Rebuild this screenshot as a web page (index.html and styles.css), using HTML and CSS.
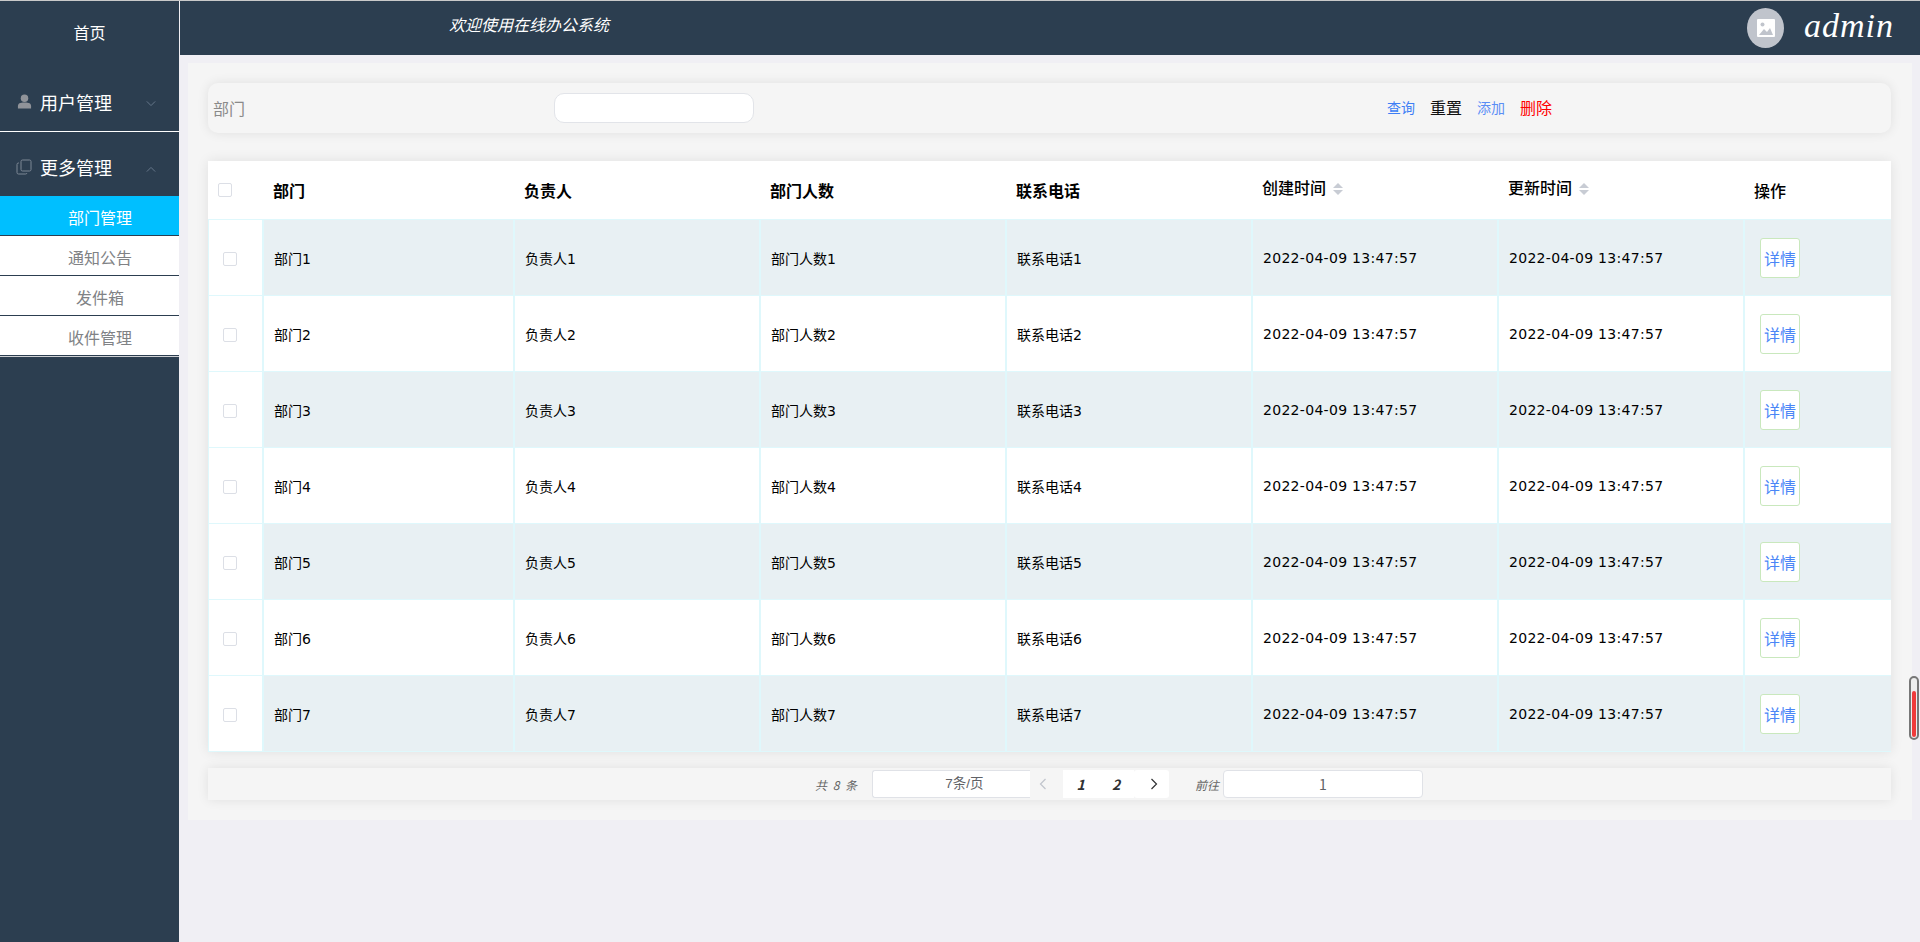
FILE: index.html
```html
<!DOCTYPE html>
<html lang="zh">
<head>
<meta charset="utf-8">
<title>在线办公系统</title>
<link rel="stylesheet" href="styles.css">
</head>
<body>
<aside class="sidebar">
  <div class="home">首页</div>
  <div class="group group-first">
    <svg class="group-icon" viewBox="0 0 16 16"><circle cx="8" cy="4.500" r="4"/><path d="M1 15.500v-2.500C1 10 3 9 8 9s7 1 7 4v2.500z"/></svg>
    <span class="group-title">用户管理</span>
    <svg class="chev" viewBox="0 0 12 8"><path d="M1 1.500l5 5 5-5"/></svg>
  </div>
  <div class="group group-second">
    <svg class="group-icon copy" viewBox="0 0 16 16"><rect x="5" y="1" width="10" height="11" rx="1.500"/><path d="M3 4H2.500A1.500 1.500 0 0 0 1 5.500v8A1.500 1.500 0 0 0 2.500 15h7a1.500 1.500 0 0 0 1.500-1"/></svg>
    <span class="group-title">更多管理</span>
    <svg class="chev" viewBox="0 0 12 8"><path d="M1 6.500l5-5 5 5"/></svg>
  </div>
  <ul class="submenu">
    <li class="active">部门管理</li>
    <li>通知公告</li>
    <li>发件箱</li>
    <li>收件管理</li>
  </ul>
</aside>
<div class="main">
  <header class="topbar">
    <div class="welcome">欢迎使用在线办公系统</div>
    <div class="user">
      <span class="avatar"><svg viewBox="0 0 20 20"><rect x="1" y="1" width="18" height="18" rx="1" fill="#fff"/><circle cx="6.500" cy="6.500" r="2" fill="#c0c4cc"/><path d="M3 17l5-6 3 3 3-4 3 7z" fill="#c0c4cc"/></svg></span>
      <span class="username">admin</span>
    </div>
  </header>
  <section class="panel">
    <div class="search">
      <label class="search-label">部门</label>
      <div class="search-input"></div>
      <div class="actions">
        <a class="act act-blue">查询</a>
        <a class="act act-black">重置</a>
        <a class="act act-blue2">添加</a>
        <a class="act act-red">删除</a>
      </div>
    </div>
    <div class="table-card">
      <table class="grid">
        <colgroup><col class="c0"><col class="c1"><col class="c2"><col class="c2"><col class="c2"><col class="c2"><col class="c2"><col></colgroup>
        <thead>
          <tr>
            <th class="cb-head"><span class="check"></span></th>
            <th>部门</th><th>负责人</th><th>部门人数</th><th>联系电话</th>
            <th class="sortable">创建时间<span class="sort"><i class="up"></i><i class="down"></i></span></th>
            <th class="sortable">更新时间<span class="sort"><i class="up"></i><i class="down"></i></span></th>
            <th class="op-head">操作</th>
          </tr>
        </thead>
        <tbody>
          <tr><td class="cb"><span class="check"></span></td><td>部门1</td><td>负责人1</td><td>部门人数1</td><td>联系电话1</td><td class="time">2022-04-09 13:47:57</td><td class="time">2022-04-09 13:47:57</td><td><button class="detail">详情</button></td></tr>
          <tr><td class="cb"><span class="check"></span></td><td>部门2</td><td>负责人2</td><td>部门人数2</td><td>联系电话2</td><td class="time">2022-04-09 13:47:57</td><td class="time">2022-04-09 13:47:57</td><td><button class="detail">详情</button></td></tr>
          <tr><td class="cb"><span class="check"></span></td><td>部门3</td><td>负责人3</td><td>部门人数3</td><td>联系电话3</td><td class="time">2022-04-09 13:47:57</td><td class="time">2022-04-09 13:47:57</td><td><button class="detail">详情</button></td></tr>
          <tr><td class="cb"><span class="check"></span></td><td>部门4</td><td>负责人4</td><td>部门人数4</td><td>联系电话4</td><td class="time">2022-04-09 13:47:57</td><td class="time">2022-04-09 13:47:57</td><td><button class="detail">详情</button></td></tr>
          <tr><td class="cb"><span class="check"></span></td><td>部门5</td><td>负责人5</td><td>部门人数5</td><td>联系电话5</td><td class="time">2022-04-09 13:47:57</td><td class="time">2022-04-09 13:47:57</td><td><button class="detail">详情</button></td></tr>
          <tr><td class="cb"><span class="check"></span></td><td>部门6</td><td>负责人6</td><td>部门人数6</td><td>联系电话6</td><td class="time">2022-04-09 13:47:57</td><td class="time">2022-04-09 13:47:57</td><td><button class="detail">详情</button></td></tr>
          <tr><td class="cb"><span class="check"></span></td><td>部门7</td><td>负责人7</td><td>部门人数7</td><td>联系电话7</td><td class="time">2022-04-09 13:47:57</td><td class="time">2022-04-09 13:47:57</td><td><button class="detail">详情</button></td></tr>
        </tbody>
      </table>
    </div>
    <div class="pager">
      <span class="total">共 8 条</span>
      <div class="size">7条/页</div>
      <div class="prev"><svg viewBox="0 0 8 12"><path d="M6.500 1l-5 5 5 5"/></svg></div>
      <div class="pages"><b>1</b><b>2</b></div>
      <div class="next"><svg viewBox="0 0 8 12"><path d="M1.500 1l5 5-5 5"/></svg></div>
      <span class="goto">前往</span>
      <div class="jump">1</div>
    </div>
  </section>
</div>
<div class="scroll-thumb"><span></span></div>
</body>
</html>
```
FILE: styles.css
```css
* { box-sizing: border-box; }
html, body { margin: 0; height: 942px; overflow: hidden; }
body {
  display: flex;
  border-top: 1px solid #c9c9c9;
  background: #f0eff4;
  font-family: "Noto Sans CJK SC", "Liberation Sans", sans-serif;
  font-size: 14px;
  color: #000;
}
.sidebar { width: 179px; flex: none; height: 941px; background: #2c3e50; color: #fff; }
.home { height: 67px; padding-bottom: 6px; display: flex; align-items: center; justify-content: center; font-size: 16px; }
.group { height: 64px; padding: 6px 23px 0 17px; display: flex; align-items: center; }
.group-first { padding-top: 4px; border-bottom: 1px solid #fff; }
.group-icon { width: 15px; height: 15px; fill: #909399; flex: none; }
.group-icon.copy { width: 16px; height: 16px; margin-left: -1px; fill: none; stroke: #7d8895; stroke-width: 1; }
.group-title { font-size: 18px; margin-left: 8px; flex: 1; }
.chev { width: 10px; height: 7px; margin-top: 4px; fill: none; stroke: #66778a; stroke-width: 1.200; }
.submenu { list-style: none; margin: 0; padding: 0 0 1px; background: #cfd1d4; }
.submenu li { height: 40px; padding: 4px 0 0 21px; line-height: 35px; text-align: center; font-size: 16px; color: #808285; background: #fff; border-bottom: 1px solid #2c3e50; }
.submenu li.active { background: #00bfff; color: #fff; }
.main { flex: 1; min-width: 0; margin-left: 1px; }
.topbar { height: 54px; background: #2c3e50; display: flex; align-items: center; justify-content: space-between; padding: 0 26px 0 269px; }
.welcome { color: #fff; font-size: 16px; font-style: italic; padding-bottom: 8px; }
.user { display: flex; align-items: center; }
.avatar { width: 37px; height: 40px; border-radius: 50%; background: #c0c4cc; display: flex; align-items: center; justify-content: center; }
.avatar svg { width: 20px; height: 20px; }
.username { margin-left: 20px; padding-bottom: 4px; font-family: "Liberation Serif", serif; font-style: italic; font-size: 34px; line-height: 40px; color: #fff; letter-spacing: 1px; }
.panel { margin: 8px 8px 0 8px; height: 757px; background: #f5f5f5; padding: 20px 21px 0 20px; }
.search { height: 50px; border-radius: 10px; background: #f5f5f5; box-shadow: 0 0 12px rgba(0,0,0,.09); display: flex; align-items: center; padding-left: 5px; }
.search-label { width: 341px; font-size: 16px; color: #8a8a8a; }
.search-input { width: 200px; height: 30px; background: #fff; border: 1px solid #e2e4e9; border-radius: 10px; }
.actions { margin-left: 633px; padding-bottom: 2px; display: flex; align-items: center; }
.act-blue, .act-blue2 { font-size: 14px; color: #3d7ef5; }
.act-blue2 { color: #5b8ef5; }
.act-black { font-size: 16px; color: #111; margin: 0 15px; }
.act-red { font-size: 16px; color: #ff0000; margin-left: 15px; }
.table-card { margin-top: 28px; height: 591px; background: #fff; box-shadow: 0 0 12px rgba(0,0,0,.09); }
.grid { table-layout: fixed; width: 1683px; border-collapse: separate; border-spacing: 0; }
.c0 { width: 56px; }
.c1 { width: 251px; }
.c2 { width: 246px; }
.grid th { height: 59px; text-align: left; padding: 0 0 0 9px; font-size: 16px; font-weight: 700; background: #fff; border-bottom: 1px solid #dff8fc; }
.grid th.sortable { padding-bottom: 7px; font-weight: 500; }
.grid th.op-head { font-weight: 500; }
.grid td { height: 76px; padding: 0 0 0 10px; font-family: "DejaVu Sans", "Noto Sans CJK SC", sans-serif; font-size: 14px; border-bottom: 1px solid #dff8fc; border-right: 2px solid #dff8fc; }
.grid td:last-child { border-right: 0; padding-left: 15px; }
.grid tbody tr:nth-child(odd) td { background: #e8f0f3; }
.grid tbody tr td.cb, .grid tbody tr:nth-child(odd) td.cb { background: #fff; padding: 2px 0 0 14px; border-left: 1px solid #dff8fc; }
.grid .cb-head { padding-left: 10px; }
.check { display: block; width: 14px; height: 14px; background: #fff; border: 1px solid #dcdfe6; border-radius: 2px; }
.grid td.time { letter-spacing: .3px; }
.detail { width: 40px; height: 40px; padding: 0; background: #fff; border: 1px solid #c9e8bd; border-radius: 3px; color: #4a86f7; font-family: "Noto Sans CJK SC", sans-serif; font-size: 16px; }
.sort { display: inline-block; vertical-align: middle; margin-left: 7px; width: 10px; height: 12px; }
.sort i { display: block; width: 0; height: 0; border-left: 5px solid transparent; border-right: 5px solid transparent; }
.sort .up { border-bottom: 5px solid #c8ccd4; margin-bottom: 2px; }
.sort .down { border-top: 5px solid #c8ccd4; }
.pager { margin-top: 16px; height: 32px; background: #f5f5f5; box-shadow: 0 0 12px rgba(0,0,0,.09); display: flex; align-items: center; padding-left: 607px; }
.total { width: 57px; font-size: 12px; color: #666; font-style: italic; letter-spacing: 1.500px; }
.size { width: 158px; height: 28px; padding-left: 26px; line-height: 26px; background: #fff; border: 1px solid #e0e2e7; border-right: 0; border-radius: 3px 0 0 3px; text-align: center; color: #606266; font-family: "Liberation Sans", "Noto Sans CJK SC", sans-serif; font-size: 13.500px; }
.prev, .next { height: 28px; display: flex; align-items: center; justify-content: center; background: #f5f5f5; }
.prev { width: 33px; padding-right: 8px; }
.next { width: 35px; padding-left: 4px; background: #fff; border-radius: 3px; }
.prev svg, .next svg { width: 8px; height: 12px; fill: none; stroke: #303133; stroke-width: 1.200; }
.prev svg { stroke: #c0c4cc; }
.pages { width: 71px; height: 28px; background: #fff; display: flex; align-items: center; justify-content: space-around; font-style: italic; font-size: 14px; color: #303133; }
.goto { margin-left: 26px; width: 28px; font-size: 12px; font-style: italic; color: #666; }
.jump { width: 200px; height: 28px; line-height: 26px; background: #fff; border: 1px solid #e0e2e7; border-radius: 4px; text-align: center; color: #606266; font-size: 14px; }
.scroll-thumb { position: fixed; left: 1909px; top: 676px; width: 10px; height: 64px; border: 2px solid #777; border-radius: 5px; background: #eee; padding: 13px 1px 1px; }
.scroll-thumb span { display: block; height: 100%; background: #ef3b3b; border-radius: 2px; }
```
